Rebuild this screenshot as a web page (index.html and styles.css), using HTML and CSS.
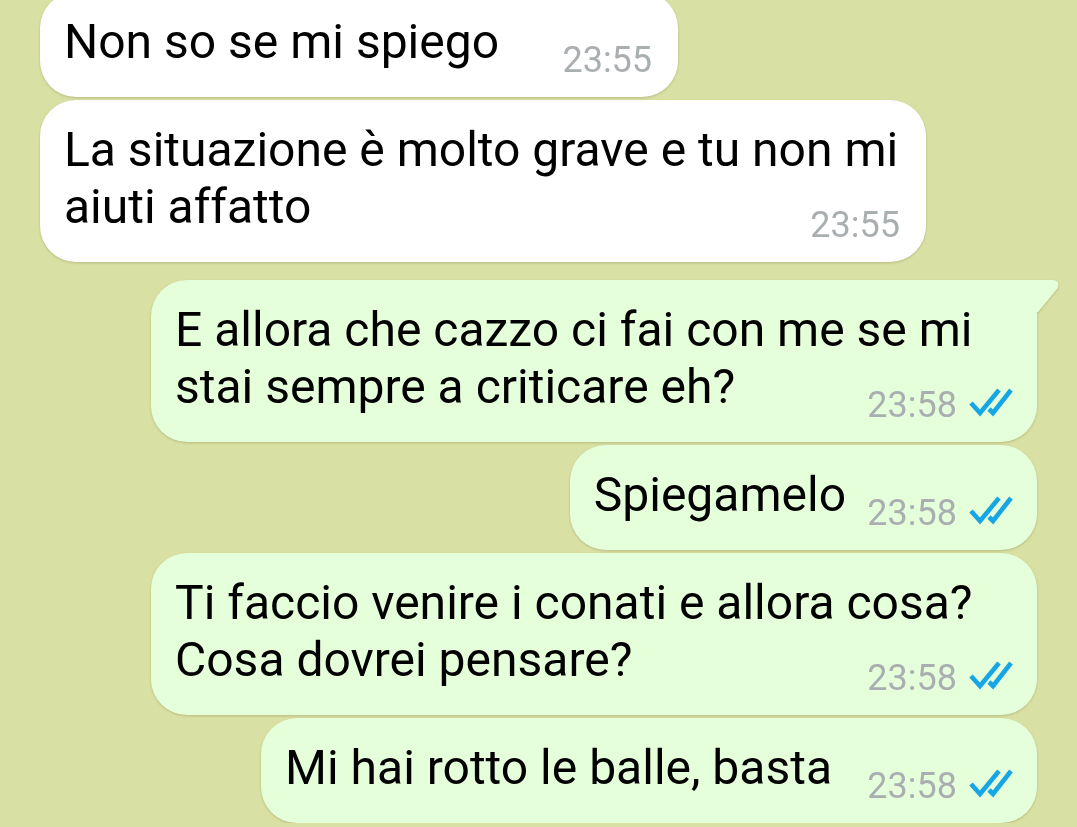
FILE: index.html
```html
<!DOCTYPE html>
<html lang="it">
<head>
    <meta charset="UTF-8">
    <meta name="viewport" content="width=device-width, initial-scale=1.0">
    <title>Chat</title>
    <link rel="stylesheet" href="styles.css">
</head>
<body>
    <!-- Simbolo della doppia spunta -->
    <svg class="symbols" aria-hidden="true">
        <symbol id="ticks" viewBox="0 0 44 30">
            <path d="M2 16 L11 26 L30 3 M20 22 L24 26 L42 3" fill="none" stroke="currentColor" stroke-width="4.6"/>
        </symbol>
    </svg>

    <main class="chat">
        <!-- Messaggi ricevuti -->
        <section class="group received">
            <div class="bubble">
                <p class="text"><span class="space-wide">Non so se mi spiego</span></p>
                <div class="meta"><time>23:55</time></div>
            </div>
            <div class="bubble">
                <p class="text">La situazione è molto grave e tu non mi aiuti affatto</p>
                <div class="meta"><time>23:55</time></div>
            </div>
        </section>

        <!-- Messaggi inviati -->
        <section class="group sent">
            <div class="bubble with-tail">
                <svg class="tail" viewBox="0 0 22 34" aria-hidden="true">
                    <path d="M0 0 H16 Q24 1 20 9 L1 32 H0 Z" fill="currentColor"/>
                </svg>
                <p class="text">E allora che cazzo ci fai con me se mi stai sempre a criticare eh?</p>
                <div class="meta"><time>23:58</time><svg class="ticks"><use href="#ticks"/></svg></div>
            </div>
            <div class="bubble">
                <p class="text"><span class="space-ticks">Spiegamelo</span></p>
                <div class="meta"><time>23:58</time><svg class="ticks"><use href="#ticks"/></svg></div>
            </div>
            <div class="bubble">
                <p class="text">Ti faccio venire i conati e allora cosa? Cosa dovrei pensare?</p>
                <div class="meta"><time>23:58</time><svg class="ticks"><use href="#ticks"/></svg></div>
            </div>
            <div class="bubble">
                <p class="text"><span class="space-ticks-wide">Mi hai rotto le balle, basta</span></p>
                <div class="meta"><time>23:58</time><svg class="ticks"><use href="#ticks"/></svg></div>
            </div>
        </section>
    </main>
</body>
</html>
```

FILE: styles.css
```css
* {
    margin: 0;
    padding: 0;
    box-sizing: border-box;
}

body {
    font-family: Roboto, 'Liberation Sans', sans-serif;
    background-color: #d9e0a3;
    color: #000;
    overflow: hidden;
}

.symbols {
    position: absolute;
    width: 0;
    height: 0;
}

.chat {
    display: flex;
    flex-direction: column;
    gap: 18px;
    margin-top: -8px;
    padding: 0 40px;
    overflow: hidden;
}

.group {
    display: flex;
    flex-direction: column;
    gap: 3px;
}

.received {
    align-items: flex-start;
}

.sent {
    align-items: flex-end;
}

.bubble {
    position: relative;
    display: flex;
    flex-direction: column;
    max-width: calc(100% - 111px);
    padding: 21px 26px 16px 24px;
    border-radius: 36px;
    background-color: #fff;
    filter: drop-shadow(0 1px 1px rgba(120, 120, 70, 0.35));
}

.sent .bubble {
    padding-right: 24px;
    background-color: #e5ffdb;
}

.sent .with-tail {
    border-top-right-radius: 0;
}

.tail {
    position: absolute;
    top: 0;
    left: 100%;
    width: 22px;
    height: 34px;
    color: #e5ffdb;
}

.text {
    font-size: 48px;
    line-height: 57px;
}

/* Spazio riservato all'orario sulla stessa riga */
.space-wide {
    padding-right: 153px;
}

.space-ticks {
    padding-right: 167px;
}

.space-ticks-wide {
    padding-right: 181px;
}

.meta {
    display: flex;
    align-items: center;
    align-self: flex-end;
    gap: 12px;
    margin-top: -31px;
    font-size: 36px;
    line-height: 42px;
    color: #a9afb1;
}

.ticks {
    width: 44px;
    height: 30px;
    margin-bottom: 6px;
    color: #16a6e6;
}
```
